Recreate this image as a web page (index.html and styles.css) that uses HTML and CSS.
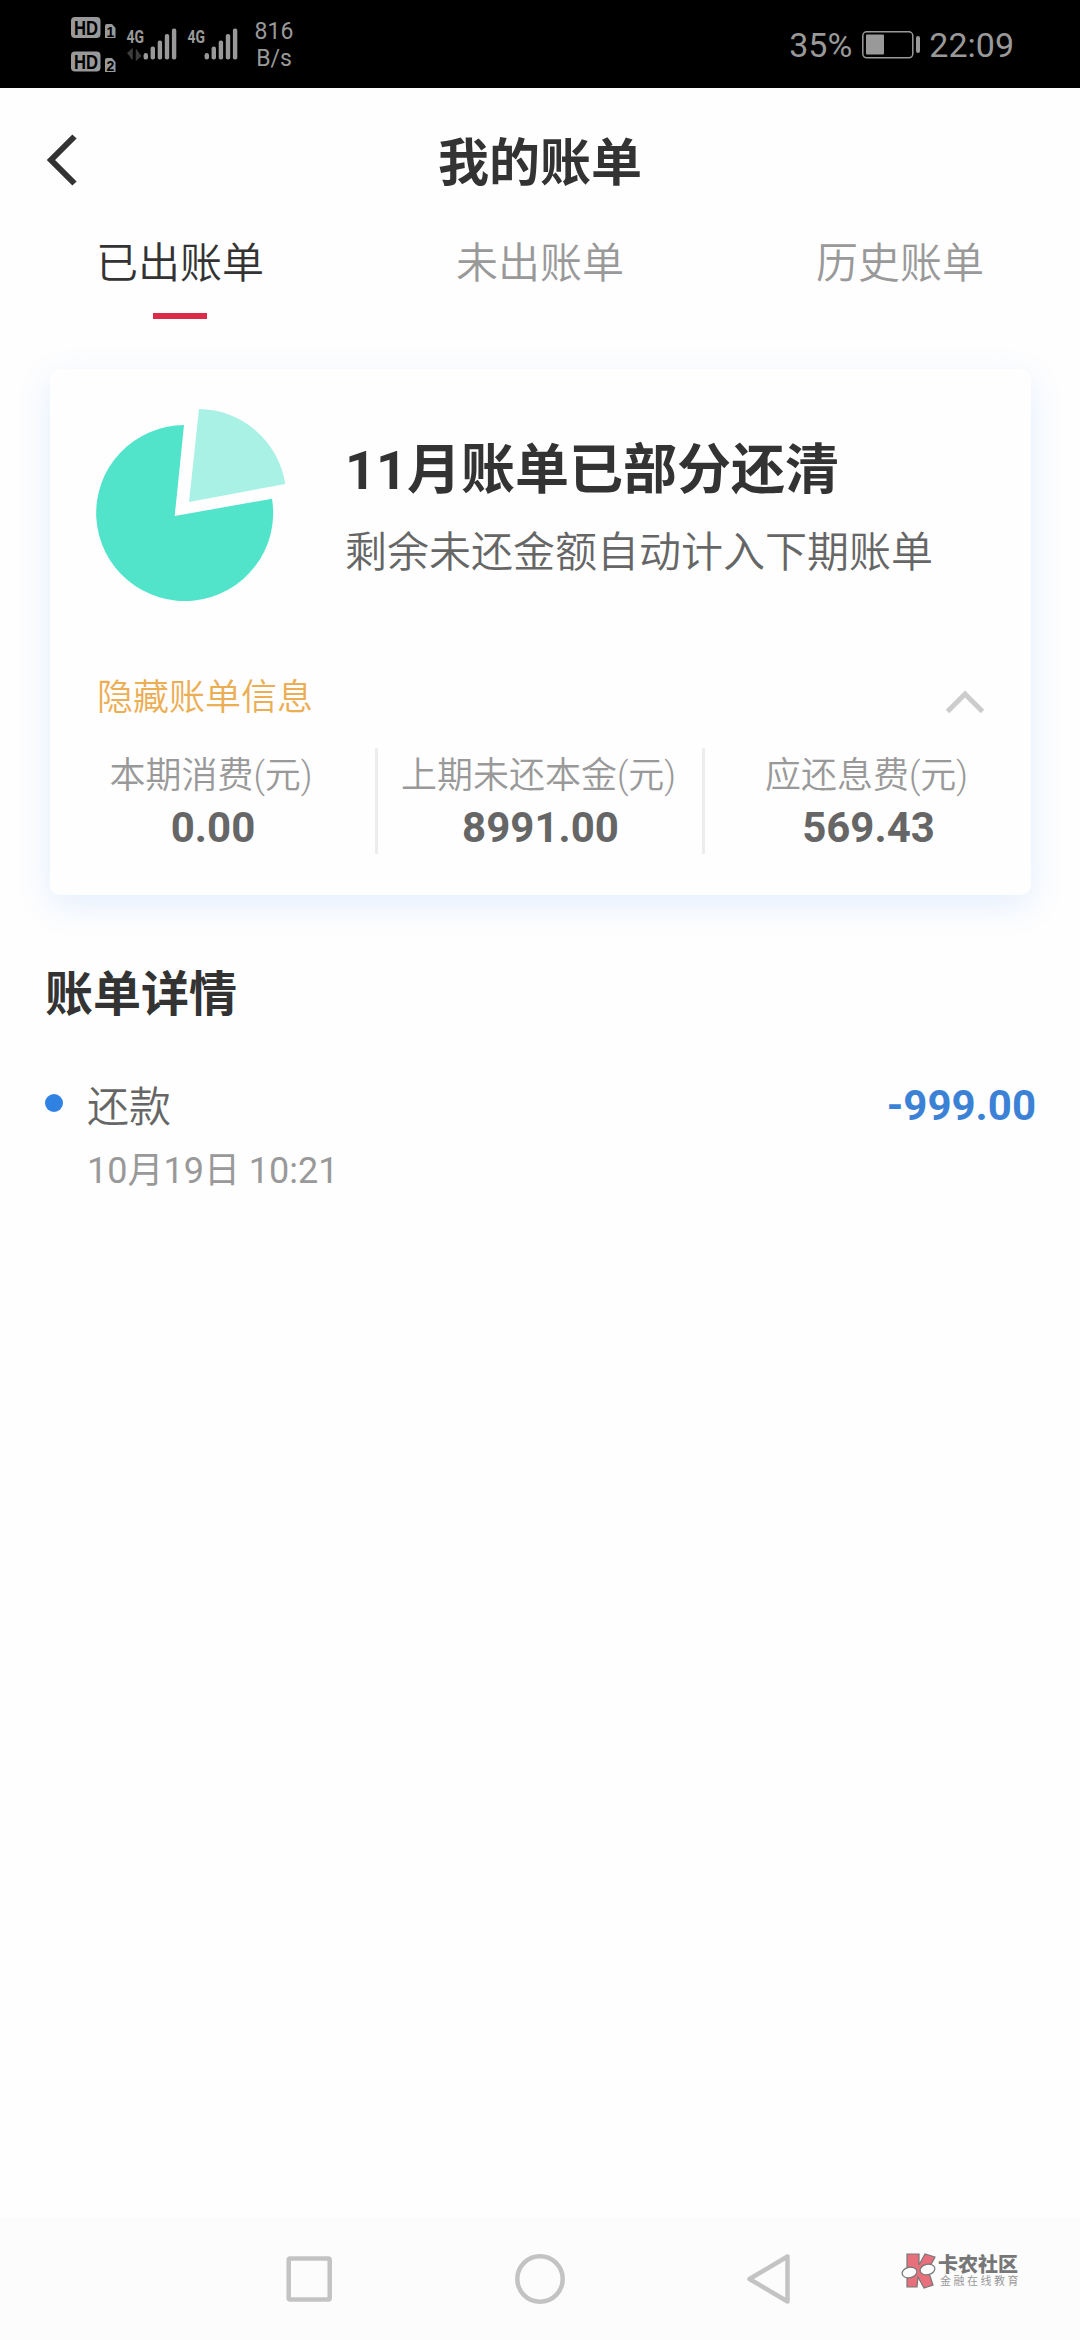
FILE: index.html
```html
<!DOCTYPE html>
<html lang="zh-CN">
<head>
<meta charset="utf-8">
<title>我的账单</title>
<link rel="stylesheet" href="styles.css">
</head>
<body>
<div class="screen">
  <div class="status">
    <svg class="status-icons" width="180" height="88" viewBox="70 0 180 88">
      <g fill="#999">
        <rect x="71" y="17" width="29.500" height="21" rx="4"/>
        <rect x="71" y="51.500" width="29.500" height="20" rx="4"/>
        <path d="M105 26q0-2 2-2h5l3.500 4v10H105z"/>
        <path d="M105 60q0-2 2-2h5l3.500 4v10H105z"/>
        <path d="M145.800 53a2.200 2.200 0 0 1 2.200 2.200v2.200a2.200 2.200 0 0 1-4.400 0v-2.200a2.200 2.200 0 0 1 2.200-2.200z"/>
        <rect x="150.600" y="46.500" width="4.400" height="13" rx="2"/>
        <rect x="157.700" y="40.500" width="4.400" height="19" rx="2"/>
        <rect x="164.800" y="34" width="4.400" height="25.500" rx="2"/>
        <rect x="171.900" y="28.500" width="4.400" height="31" rx="2"/>
        <rect x="204.600" y="53" width="4.400" height="6.500" rx="2.200"/>
        <rect x="211.600" y="46.500" width="4.400" height="13" rx="2"/>
        <rect x="218.700" y="40.500" width="4.400" height="19" rx="2"/>
        <rect x="225.800" y="34" width="4.400" height="25.500" rx="2"/>
        <rect x="232.900" y="28.500" width="4.400" height="31" rx="2"/>
      </g>
      <path d="M127.500 53.500l4.500-4v10M136.500 49.500v10l4.500-4" fill="#3c3c3c" stroke="#3c3c3c" stroke-width="1.500"/>
      <g class="badge-text">
        <text x="74" y="34.800" font-size="20" textLength="24" lengthAdjust="spacingAndGlyphs">HD</text>
        <text x="74" y="68.800" font-size="20" textLength="24" lengthAdjust="spacingAndGlyphs">HD</text>
        <text x="106.500" y="36.500" font-size="14">1</text>
        <text x="106.500" y="70.500" font-size="14">2</text>
      </g>
      <g class="net-text">
        <text x="126.500" y="42.500" textLength="17.500" lengthAdjust="spacingAndGlyphs">4G</text>
        <text x="187.500" y="42.500" textLength="17.500" lengthAdjust="spacingAndGlyphs">4G</text>
      </g>
    </svg>
    <div class="speed">816<br>B/s</div>
    <div class="battery-pct">35%</div>
    <svg class="battery" width="58" height="28" viewBox="0 0 58 28">
      <rect x=".8" y=".8" width="50" height="26" rx="4" fill="none" stroke="#999" stroke-width="1.500"/>
      <rect x="4" y="3.500" width="18" height="20" rx="1" fill="#999"/>
      <rect x="54" y="5" width="4" height="17" rx="2" fill="#999"/>
    </svg>
    <div class="clock">22:09</div>
  </div>

  <header class="header">
    <svg class="back" width="34" height="52" viewBox="0 0 34 52">
      <path d="M29.500 2.500L6 26l23.500 23.500" fill="none" stroke="#333" stroke-width="6"/>
    </svg>
    <h1 class="title">我的账单</h1>
  </header>

  <nav class="tabs">
    <div class="tab tab-active">已出账单</div>
    <div class="tab">未出账单</div>
    <div class="tab">历史账单</div>
  </nav>

  <section class="card">
    <div class="summary">
      <svg class="pie" width="192" height="194" viewBox="95 408 192 194">
        <path d="M184 425A88.500 88 0 1 0 272 498.700L174.700 516z" fill="#51e4cb"/>
        <path d="M199 409A88.500 88.500 0 0 1 285.300 484L189 502z" fill="#aaf1e5"/>
      </svg>
      <div class="summary-text">
        <h2 class="headline">11月账单已部分还清</h2>
        <p class="note">剩余未还金额自动计入下期账单</p>
      </div>
    </div>
    <div class="toggle">
      <span class="toggle-label">隐藏账单信息</span>
      <svg class="chevron" width="40" height="24" viewBox="0 0 40 24">
        <path d="M2.500 21.500L20 4l17.500 17.500" fill="none" stroke="#ccc" stroke-width="5"/>
      </svg>
    </div>
    <div class="stats">
      <div class="stat"><span class="stat-label">本期消费(元)</span><b class="stat-value">0.00</b></div>
      <div class="stat"><span class="stat-label">上期未还本金(元)</span><b class="stat-value">8991.00</b></div>
      <div class="stat"><span class="stat-label">应还息费(元)</span><b class="stat-value">569.43</b></div>
    </div>
  </section>

  <section class="details">
    <h2 class="details-title">账单详情</h2>
    <div class="entry">
      <span class="dot"></span>
      <span class="entry-name">还款</span>
      <b class="entry-amount">-999.00</b>
    </div>
    <div class="entry-date">10月19日 10:21</div>
  </section>

  <footer class="navbar">
    <svg class="nav-keys" width="520" height="52" viewBox="280 2253 520 52" fill="none" stroke="#c3c3c3" stroke-width="4.500" stroke-linejoin="round">
      <rect x="288.700" y="2258.500" width="41" height="41" rx="1.500"/>
      <circle cx="540" cy="2279" r="22.700"/>
      <path d="M787.500 2256.500v45L749.500 2279z"/>
    </svg>
    <div class="watermark">
      <svg width="36" height="38" viewBox="0 0 36 38">
        <path d="M6 2h12v11l6-11 10 3-7 13 5 15-9 3-6-11-1 10H6z" fill="#e8707c" stroke="#777" stroke-width="1.200"/>
        <ellipse cx="8.500" cy="20.500" rx="7.500" ry="5.200" fill="#fcfcfc" stroke="#777" stroke-width="1.200" transform="rotate(-12 8.500 20.500)"/>
        <ellipse cx="26.500" cy="17.500" rx="7.500" ry="5.200" fill="#fcfcfc" stroke="#777" stroke-width="1.200" transform="rotate(-12 26.500 17.500)"/>
      </svg>
      <div class="watermark-text">
        <div class="watermark-name">卡农社区</div>
        <div class="watermark-sub">金融在线教育</div>
      </div>
    </div>
  </footer>
</div>
</body>
</html>
```
FILE: styles.css
```css
* { box-sizing: border-box; margin: 0; padding: 0; }
body { background: #fff; }
.screen {
  width: 1080px;
  height: 2340px;
  display: flex;
  flex-direction: column;
  background: #fefefe;
  color: #333;
  font-family: Roboto, "Noto Sans CJK SC", sans-serif;
  overflow: hidden;
}

.status {
  height: 88px;
  background: #000;
  color: #999;
  display: flex;
  align-items: center;
  padding: 0 66px 0 70px;
}
.badge-text { fill: #000; font-family: "Liberation Sans", sans-serif; font-weight: 700; }
.net-text { fill: #999; font-size: 19px; font-weight: 700; }
.speed { width: 48px; font-size: 23px; line-height: 27px; text-align: center; padding-top: 2px; }
.battery-pct { margin-left: auto; font-size: 34px; line-height: 40px; padding-top: 2px; }
.battery { margin: 1px 0 0 10px; }
.clock { margin-left: 9px; font-size: 34px; line-height: 40px; padding-top: 2px; }

.header {
  height: 146px;
  display: grid;
  grid-template-columns: 1fr auto 1fr;
  align-items: center;
  padding: 0 45px;
}
.back { margin-top: -2px; }
.title { font-size: 51px; line-height: 60px; font-weight: 700; padding-top: 5px; }

.tabs { height: 85px; display: grid; grid-template-columns: repeat(3, 1fr); }
.tab {
  display: flex;
  flex-direction: column;
  align-items: center;
  padding-top: 2px;
  font-size: 42px;
  line-height: 56px;
  font-weight: 350;
  color: #999;
}
.tab-active { color: #333; }
.tab-active::after { content: ""; width: 54px; height: 6px; margin-top: 21px; background: #dc2a49; }

.card {
  height: 526px;
  margin: 50px 49px 0 50px;
  border-radius: 10px;
  background: #fefefe;
  box-shadow: 0 10px 34px rgba(50, 130, 250, .13);
}
.summary { display: flex; padding: 39px 0 0 45px; height: 291px; }
.summary-text { padding: 31px 0 0 58px; }
.headline { font-size: 54px; line-height: 64px; font-weight: 700; }
.note { margin-top: 25px; font-size: 42px; line-height: 50px; font-weight: 350; color: #666; }
.toggle { display: flex; justify-content: space-between; padding: 13px 46px 0 47px; height: 88px; }
.toggle-label { font-size: 36px; line-height: 50px; font-weight: 350; color: #ecae55; }
.chevron { margin-top: 17px; }
.stats { display: grid; grid-template-columns: 328px 327px 1fr; height: 106px; }
.stat { display: flex; flex-direction: column; align-items: center; border-right: 3px solid #ededed; }
.stat:last-child { border-right: 0; }
.stat-label { font-size: 36px; line-height: 52px; padding: 2px 3px 0 0; font-weight: 350; color: #999; }
.stat-value { font-size: 42px; line-height: 52px; padding-left: 1px; color: #666; }

.details { padding: 65px 45px 0; }
.details-title { font-size: 48px; line-height: 70px; font-weight: 700; }
.entry { display: flex; align-items: center; height: 60px; margin-top: 45px; }
.dot { width: 18px; height: 18px; border-radius: 50%; background: #2f82e2; margin-top: -4px; }
.entry-name { margin-left: 24px; font-size: 42px; line-height: 60px; padding-top: 5px; font-weight: 350; color: #666; }
.entry-amount { margin-right: -1px; margin-left: auto; font-size: 42px; color: #3b82d6; }
.entry-date { margin: 11px 0 0 42px; font-size: 36px; line-height: 50px; color: #999; }

.navbar {
  margin-top: auto;
  height: 122px;
  background: #fcfcfc;
  display: flex;
  align-items: center;
  padding-left: 280px;
}
.watermark { display: flex; align-items: center; margin: -17px 0 0 101px; color: #777; }
.watermark-text { margin-left: 1px; }
.watermark-name { font-size: 20px; line-height: 22px; font-weight: 900; }
.watermark-sub { font-size: 11px; line-height: 12px; letter-spacing: 2.500px; padding-left: 2px; white-space: nowrap; color: #999; }
```
